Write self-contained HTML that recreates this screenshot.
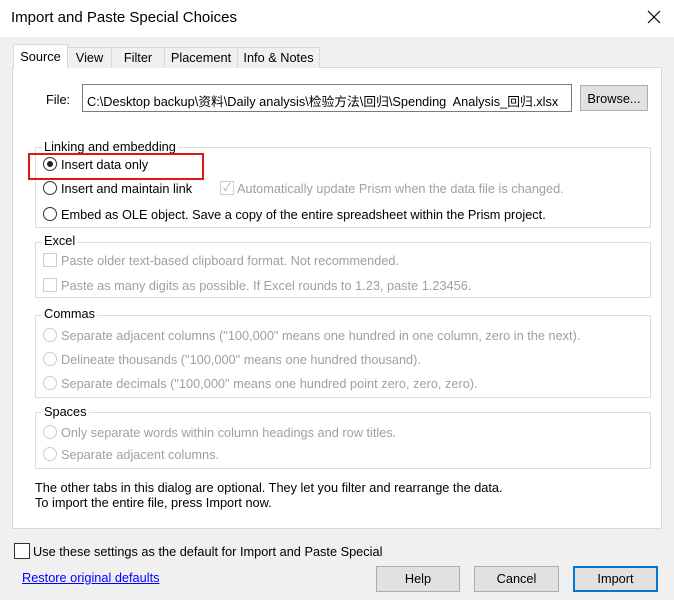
<!DOCTYPE html>
<html><head><meta charset="utf-8"><style>
*{margin:0;padding:0;box-sizing:border-box}
body{width:674px;height:600px;background:#f0f0f0;font-family:"Liberation Sans","Noto Sans CJK SC",sans-serif;font-size:12.75px;color:#000;position:relative;overflow:hidden}
.a{position:absolute;white-space:nowrap}
.g{color:#a0a0a0}
.box{position:absolute;border:1px solid #dcdcdc}
.lbl{position:absolute;background:#fff;padding:0 2px;line-height:14px}
.rad{position:absolute;width:14px;height:14px;border:1px solid #333;border-radius:50%;background:#fff}
.rad.d{border-color:#ccc}
.chk{position:absolute;width:14px;height:14px;border:1px solid #ccc;background:#fff}
.btn{position:absolute;height:26px;border:1px solid #adadad;background:#e1e1e1;text-align:center;line-height:24px}
.tab{position:absolute;top:47px;height:21px;border:1px solid #d9d9d9;border-bottom:none;background:#f0f0f0;text-align:center;line-height:20px}
</style></head><body>
<div class="a" style="left:0;top:0;width:674px;height:37px;background:#fff"></div>
<div class="a" style="left:11px;top:9px;font-size:15px">Import and Paste Special Choices</div>
<svg class="a" style="left:647px;top:10px" width="14" height="14"><path d="M1 1L13 13M13 1L1 13" stroke="#000" stroke-width="1.2"/></svg>
<div class="a" style="left:12px;top:67px;width:650px;height:462px;background:#fff;border:1px solid #d9d9d9"></div>
<div class="tab" style="left:67px;width:45px">View</div>
<div class="tab" style="left:111px;width:54px">Filter</div>
<div class="tab" style="left:164px;width:74px">Placement</div>
<div class="tab" style="left:237px;width:83px">Info &amp; Notes</div>
<div class="tab" style="left:13px;top:44px;height:25px;width:55px;background:#fff;line-height:24px">Source</div>
<div class="a" style="left:46px;top:92px">File:</div>
<div class="a" style="left:82px;top:84px;width:490px;height:28px;border:1px solid #7a7a7a;background:#fff;padding:6px 0 0 4px;overflow:hidden">C:\Desktop backup\资料\Daily analysis\检验方法\回归\Spending&nbsp; Analysis_回归.xlsx</div>
<div class="btn" style="left:580px;top:85px;width:68px;line-height:26px">Browse...</div>

<div class="box" style="left:35px;top:147px;width:616px;height:81px"></div>
<div class="lbl" style="left:42px;top:140px">Linking and embedding</div>
<div class="a" style="left:28px;top:153px;width:176px;height:27px;border:2px solid #e0151b"></div>
<div class="rad" style="left:43px;top:157px"><div style="position:absolute;left:3px;top:3px;width:6px;height:6px;border-radius:50%;background:#222"></div></div>
<div class="a" style="left:61px;top:157px">Insert data only</div>
<div class="rad" style="left:43px;top:181px"></div>
<div class="a" style="left:61px;top:181px">Insert and maintain link</div>
<div class="chk" style="left:220px;top:181px;color:#aaa;font-size:11px;line-height:12px;text-align:center">✓</div>
<div class="a g" style="left:237px;top:181px">Automatically update Prism when the data file is changed.</div>
<div class="rad" style="left:43px;top:207px"></div>
<div class="a" style="left:61px;top:207px">Embed as OLE object. Save a copy of the entire spreadsheet within the Prism project.</div>

<div class="box" style="left:35px;top:242px;width:616px;height:56px"></div>
<div class="lbl" style="left:42px;top:234px">Excel</div>
<div class="chk" style="left:43px;top:253px"></div>
<div class="a g" style="left:61px;top:253px">Paste older text-based clipboard format. Not recommended.</div>
<div class="chk" style="left:43px;top:278px"></div>
<div class="a g" style="left:61px;top:278px">Paste as many digits as possible. If Excel rounds to 1.23, paste 1.23456.</div>

<div class="box" style="left:35px;top:315px;width:616px;height:83px"></div>
<div class="lbl" style="left:42px;top:307px">Commas</div>
<div class="rad d" style="left:43px;top:328px"></div>
<div class="a g" style="left:61px;top:328px">Separate adjacent columns ("100,000" means one hundred in one column, zero in the next).</div>
<div class="rad d" style="left:43px;top:352px"></div>
<div class="a g" style="left:61px;top:352px">Delineate thousands ("100,000" means one hundred thousand).</div>
<div class="rad d" style="left:43px;top:376px"></div>
<div class="a g" style="left:61px;top:376px">Separate decimals ("100,000" means one hundred point zero, zero, zero).</div>

<div class="box" style="left:35px;top:412px;width:616px;height:57px"></div>
<div class="lbl" style="left:42px;top:405px">Spaces</div>
<div class="rad d" style="left:43px;top:425px"></div>
<div class="a g" style="left:61px;top:425px">Only separate words within column headings and row titles.</div>
<div class="rad d" style="left:43px;top:447px"></div>
<div class="a g" style="left:61px;top:447px">Separate adjacent columns.</div>

<div class="a" style="left:35px;top:480px">The other tabs in this dialog are optional. They let you filter and rearrange the data.</div>
<div class="a" style="left:35px;top:495px">To import the entire file, press Import now.</div>

<div class="a" style="left:14px;top:543px;width:16px;height:16px;border:1px solid #333;background:#fff"></div>
<div class="a" style="left:33px;top:544px">Use these settings as the default for Import and Paste Special</div>
<div class="a" style="left:22px;top:570px;color:#0000ff;text-decoration:underline">Restore original defaults</div>
<div class="btn" style="left:376px;top:566px;width:84px">Help</div>
<div class="btn" style="left:474px;top:566px;width:85px">Cancel</div>
<div class="btn" style="left:573px;top:566px;width:85px;border:2px solid #0078d7;line-height:22px">Import</div>
</body></html>
